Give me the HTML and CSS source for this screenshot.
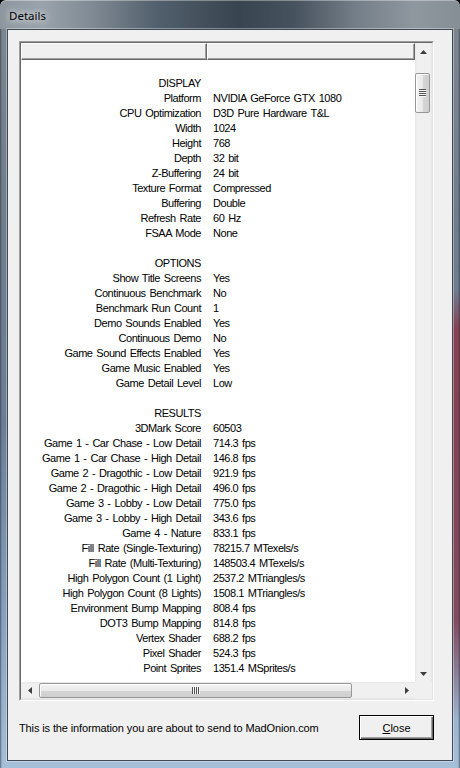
FILE: index.html
```html
<!DOCTYPE html>
<html>
<head>
<meta charset="utf-8">
<link rel="stylesheet" href="styles.css">
</head>
<body>
<div class="window">
  <div class="titlebar"><span class="title">Details</span></div>
  <div class="client">
    <div class="listview">
      <div class="lv-inner">
        <div class="lv-main">
          <div class="lv-cols">
            <div class="header"><div class="hcell c1"></div><div class="hcell c2"></div></div>
            <div class="rows">
              <div class="row"><span class="k"></span><span class="v"></span></div>
              <div class="row"><span class="k">DISPLAY</span><span class="v"></span></div>
              <div class="row"><span class="k">Platform</span><span class="v">NVIDIA GeForce GTX 1080</span></div>
              <div class="row"><span class="k">CPU Optimization</span><span class="v">D3D Pure Hardware T&amp;L</span></div>
              <div class="row"><span class="k">Width</span><span class="v">1024</span></div>
              <div class="row"><span class="k">Height</span><span class="v">768</span></div>
              <div class="row"><span class="k">Depth</span><span class="v">32 bit</span></div>
              <div class="row"><span class="k">Z-Buffering</span><span class="v">24 bit</span></div>
              <div class="row"><span class="k">Texture Format</span><span class="v">Compressed</span></div>
              <div class="row"><span class="k">Buffering</span><span class="v">Double</span></div>
              <div class="row"><span class="k">Refresh Rate</span><span class="v">60 Hz</span></div>
              <div class="row"><span class="k">FSAA Mode</span><span class="v">None</span></div>
              <div class="row"><span class="k"></span><span class="v"></span></div>
              <div class="row"><span class="k">OPTIONS</span><span class="v"></span></div>
              <div class="row"><span class="k">Show Title Screens</span><span class="v">Yes</span></div>
              <div class="row"><span class="k">Continuous Benchmark</span><span class="v">No</span></div>
              <div class="row"><span class="k">Benchmark Run Count</span><span class="v">1</span></div>
              <div class="row"><span class="k">Demo Sounds Enabled</span><span class="v">Yes</span></div>
              <div class="row"><span class="k">Continuous Demo</span><span class="v">No</span></div>
              <div class="row"><span class="k">Game Sound Effects Enabled</span><span class="v">Yes</span></div>
              <div class="row"><span class="k">Game Music Enabled</span><span class="v">Yes</span></div>
              <div class="row"><span class="k">Game Detail Level</span><span class="v">Low</span></div>
              <div class="row"><span class="k"></span><span class="v"></span></div>
              <div class="row"><span class="k">RESULTS</span><span class="v"></span></div>
              <div class="row"><span class="k">3DMark Score</span><span class="v">60503</span></div>
              <div class="row"><span class="k">Game 1 - Car Chase - Low Detail</span><span class="v">714.3 fps</span></div>
              <div class="row"><span class="k">Game 1 - Car Chase - High Detail</span><span class="v">146.8 fps</span></div>
              <div class="row"><span class="k">Game 2 - Dragothic - Low Detail</span><span class="v">921.9 fps</span></div>
              <div class="row"><span class="k">Game 2 - Dragothic - High Detail</span><span class="v">496.0 fps</span></div>
              <div class="row"><span class="k">Game 3 - Lobby - Low Detail</span><span class="v">775.0 fps</span></div>
              <div class="row"><span class="k">Game 3 - Lobby - High Detail</span><span class="v">343.6 fps</span></div>
              <div class="row"><span class="k">Game 4 - Nature</span><span class="v">833.1 fps</span></div>
              <div class="row"><span class="k">Fill Rate (Single-Texturing)</span><span class="v">78215.7 MTexels/s</span></div>
              <div class="row"><span class="k">Fill Rate (Multi-Texturing)</span><span class="v">148503.4 MTexels/s</span></div>
              <div class="row"><span class="k">High Polygon Count (1 Light)</span><span class="v">2537.2 MTriangles/s</span></div>
              <div class="row"><span class="k">High Polygon Count (8 Lights)</span><span class="v">1508.1 MTriangles/s</span></div>
              <div class="row"><span class="k">Environment Bump Mapping</span><span class="v">808.4 fps</span></div>
              <div class="row"><span class="k">DOT3 Bump Mapping</span><span class="v">814.8 fps</span></div>
              <div class="row"><span class="k">Vertex Shader</span><span class="v">688.2 fps</span></div>
              <div class="row"><span class="k">Pixel Shader</span><span class="v">524.3 fps</span></div>
              <div class="row"><span class="k">Point Sprites</span><span class="v">1351.4 MSprites/s</span></div>
              <div class="row"><span class="k"></span><span class="v"></span></div>
            </div>
          </div>
          <div class="vscroll">
            <div class="sbtn"><svg width="7" height="4" viewBox="0 0 7 4"><polygon points="0,4 7,4 3.5,0" fill="#3c3c3c"/></svg></div>
            <div class="vtrack">
              <div class="vthumb"><span class="grip-h"></span></div>
            </div>
            <div class="sbtn"><svg width="7" height="4" viewBox="0 0 7 4"><polygon points="0,0 7,0 3.5,4" fill="#3c3c3c"/></svg></div>
          </div>
        </div>
        <div class="hrow">
          <div class="hscroll">
            <div class="sbtn"><svg width="4" height="7" viewBox="0 0 4 7"><polygon points="4,0 4,7 0,3.5" fill="#3c3c3c"/></svg></div>
            <div class="htrack">
              <div class="hthumb"><span class="grip-v"></span></div>
            </div>
            <div class="sbtn"><svg width="4" height="7" viewBox="0 0 4 7"><polygon points="0,0 0,7 4,3.5" fill="#3c3c3c"/></svg></div>
          </div>
          <div class="corner"></div>
        </div>
      </div>
    </div>
    <div class="footer">
      <span class="info">This is the information you are about to send to MadOnion.com</span>
      <button class="btn"><u>C</u>lose</button>
    </div>
  </div>
</div>
</body>
</html>
```
FILE: styles.css
```css
html, body {
  margin: 0;
  padding: 0;
  background: #000;
}
.window {
  width: 460px;
  height: 768px;
  box-sizing: border-box;
  display: flex;
  flex-direction: column;
  border-radius: 6px 6px 0 0;
  overflow: hidden;
  background:
    linear-gradient(90deg, rgba(40,50,60,0.6) 0, rgba(0,0,0,0) 2px, rgba(0,0,0,0) 458px, rgba(40,50,60,0.6) 460px),
    linear-gradient(180deg, rgba(0,0,0,0) 0, rgba(0,0,0,0) 290px, rgba(138,58,74,0.9) 330px, rgba(130,60,78,0.85) 620px, rgba(0,0,0,0) 720px) right top / 7px 100% no-repeat,
    linear-gradient(180deg, #7d8790 0, #6f7c8c 30%, #6b7d95 55%, #86a0bd 80%, #a6bfd8 100%);
  font-family: "Liberation Sans", Arial, sans-serif;
}
.titlebar {
  height: 29px;
  flex: none;
  display: flex;
  align-items: center;
  padding-left: 9px;
  background: linear-gradient(90deg, #8d969e 0%, #9aa3ab 9%, #808a94 20%, #52606d 34%, #38444f 52%, #46525e 64%, #76808a 78%, #8f979f 90%, #858d95 100%);
  border-radius: 6px 6px 0 0;
  box-shadow: inset 0 1px 0 rgba(255,255,255,0.35);
}
.title {
  font-family: "Noto Sans", "Open Sans", sans-serif;
  font-size: 11.5px;
  color: #000;
  margin-top: 1px;
  text-shadow: 0 0 6px rgba(255,255,255,0.9), 0 0 10px rgba(255,255,255,0.7);
}
.client {
  flex: 1;
  margin: 0 7px 7px 7px;
  background: #f0f0f0;
  border: 1px solid #3e4954;
  box-shadow: 0 0 0 1px rgba(255,255,255,0.35);
  display: flex;
  flex-direction: column;
  padding: 11px 18px 0 11px;
}
.listview {
  width: 415px;
  height: 660px;
  box-sizing: border-box;
  border: 1px solid;
  border-color: #a0a0a0 #ffffff #ffffff #a0a0a0;
}
.lv-inner {
  height: 100%;
  box-sizing: border-box;
  border: 1px solid;
  border-color: #696969 #e3e3e3 #e3e3e3 #696969;
  display: flex;
  flex-direction: column;
  background: #fff;
}
.lv-main {
  flex: 1;
  display: flex;
  min-height: 0;
}
.lv-cols {
  flex: 1;
  display: flex;
  flex-direction: column;
  min-width: 0;
  overflow: hidden;
}
.header {
  display: flex;
  height: 17px;
  flex: none;
}
.hcell {
  box-sizing: border-box;
  height: 17px;
  background: #f0f0f0;
  border-top: 1px solid #fff;
  border-left: 1px solid #fff;
  border-right: 1px solid #696969;
  border-bottom: 1px solid #696969;
  box-shadow: inset -1px -1px 0 #a0a0a0;
}
.c1 { width: 186px; }
.c2 { flex: 1; }
.rows {
  flex: 1;
  overflow: hidden;
  padding-top: 1px;
  font-size: 11px;
  letter-spacing: -0.45px;
  word-spacing: 1.2px;
  color: #000;
}
.row {
  display: flex;
  height: 15px;
  line-height: 15px;
  white-space: nowrap;
}
.k {
  width: 186px;
  flex: none;
  box-sizing: border-box;
  text-align: right;
  padding-right: 6px;
}
.v {
  padding-left: 6px;
}
.vscroll {
  width: 17px;
  flex: none;
  display: flex;
  flex-direction: column;
  background: linear-gradient(90deg, #e6e6e6 0, #f0f0f0 2px, #f0f0f0 15px, #e6e6e6 17px);
}
.sbtn {
  width: 17px;
  height: 17px;
  flex: none;
  display: flex;
  align-items: center;
  justify-content: center;
}
.vtrack {
  flex: 1;
  padding-top: 13px;
}
.vthumb {
  width: 15px;
  height: 40px;
  box-sizing: border-box;
  border: 1px solid #979797;
  border-radius: 2px;
  background: linear-gradient(90deg, #f4f4f4 0, #e9e9e9 50%, #d6d6d6 51%, #cfcfcf 100%);
  box-shadow: inset 1px 1px 0 #fff;
  display: flex;
  align-items: center;
  justify-content: center;
}
.grip-h {
  width: 7px;
  height: 8px;
  background: repeating-linear-gradient(180deg, #535353 0, #535353 1px, #f6f6f6 1px, #f6f6f6 2px);
}
.hrow {
  display: flex;
  height: 17px;
  flex: none;
}
.hscroll {
  flex: 1;
  display: flex;
  background: linear-gradient(180deg, #e6e6e6 0, #f0f0f0 2px, #f0f0f0 15px, #e6e6e6 17px);
}
.htrack {
  flex: 1;
  padding-left: 1px;
  padding-right: 46px;
  display: flex;
  align-items: center;
}
.hthumb {
  flex: 1;
  height: 15px;
  box-sizing: border-box;
  border: 1px solid #979797;
  border-radius: 2px;
  background: linear-gradient(180deg, #f4f4f4 0, #e9e9e9 50%, #d6d6d6 51%, #cfcfcf 100%);
  box-shadow: inset 1px 1px 0 #fff;
  display: flex;
  align-items: center;
  justify-content: center;
}
.grip-v {
  width: 8px;
  height: 7px;
  background: repeating-linear-gradient(90deg, #535353 0, #535353 1px, #f6f6f6 1px, #f6f6f6 2px);
}
.corner {
  width: 17px;
  flex: none;
  background: #f0f0f0;
}
.footer {
  display: flex;
  align-items: center;
  justify-content: space-between;
  margin-top: 14px;
}
.info {
  font-size: 11px;
  letter-spacing: -0.12px;
  color: #000;
}
.btn {
  width: 75px;
  height: 25px;
  box-sizing: border-box;
  margin: 0;
  padding: 0;
  background: #f0f0f0;
  border: 1px solid #000;
  box-shadow: inset 1px 1px 0 #fff, inset -1px -1px 0 #696969, inset -2px -2px 0 #a0a0a0;
  font-family: "Liberation Sans", Arial, sans-serif;
  font-size: 11px;
  color: #000;
}
```
